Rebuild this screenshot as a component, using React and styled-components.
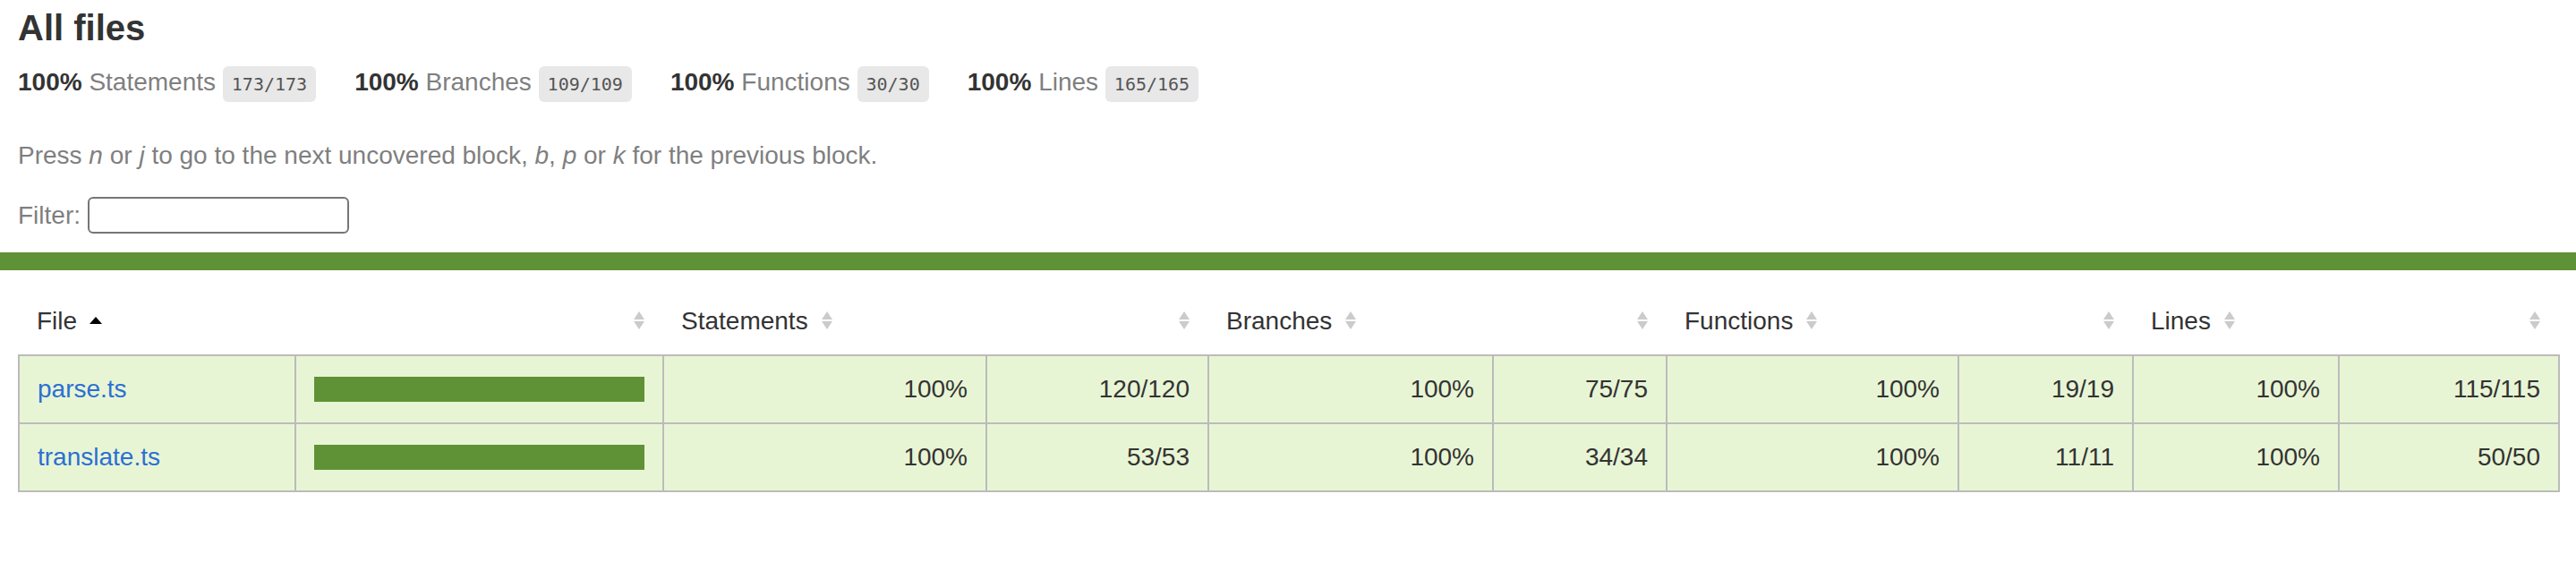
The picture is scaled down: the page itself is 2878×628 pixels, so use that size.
import React from "react";
import styled, { createGlobalStyle } from "styled-components";

const GlobalStyle = createGlobalStyle`
  *, *:before, *:after {
    box-sizing: border-box;
  }
  html, body {
    margin: 0;
    padding: 0;
    background: #fff;
  }
  body {
    font-family: "Liberation Sans", Helvetica, Arial, sans-serif;
    font-size: 28px;
    line-height: 34px;
    color: #333;
  }
`;

const GREEN = "#5f9236";
const HIGH_BG = "#e8f5d5";

const Header = styled.div`
  padding: 7px 20px 20px;
`;

const Title = styled.h1`
  margin: 0;
  font-size: 40px;
  line-height: 48px;
  font-weight: bold;
`;

const SummaryRow = styled.div`
  display: flex;
`;

const SummaryItem = styled.div`
  padding: 20px 43px 20px 0;
  white-space: nowrap;
`;

const Strong = styled.span`
  font-weight: bold;
`;

const Quiet = styled.span`
  color: #7f7f7f;
`;

const Fraction = styled.span`
  font-family: "DejaVu Sans Mono", "Liberation Mono", monospace;
  font-size: 20px;
  line-height: 24px;
  color: #555;
  background: #e8e8e8;
  padding: 8px 10px;
  border-radius: 6px;
  vertical-align: middle;
`;

const Hint = styled.p`
  margin: 28px 0;
  color: #7f7f7f;
`;

const FilterRow = styled.div`
  display: flex;
  align-items: center;
  gap: 8px;
  height: 43px;
  color: #7f7f7f;
`;

const SearchInput = styled.input`
  appearance: none;
  width: 292px;
  height: 41px;
  border: 2px solid #767676;
  border-radius: 6px;
  background: #fff;
  font-size: 26px;
  padding: 2px 6px;
  outline: none;
`;

const StatusLine = styled.div`
  height: 20px;
  background: ${GREEN};
`;

const TableWrap = styled.div`
  padding: 20px;
`;

const Table = styled.table`
  width: 100%;
  table-layout: fixed;
  border-collapse: collapse;
`;

const Col = styled.col`
  width: ${(p) => p.$w}px;
`;

const HeadRow = styled.tr`
  border-bottom: 2px solid #bbb;
`;

const Th = styled.th`
  padding: 20px;
  font-weight: normal;
  white-space: nowrap;
  text-align: ${(p) => (p.$right ? "right" : "left")};
`;

const Sorter = styled.span`
  display: inline-block;
  width: 14px;
  height: 20px;
  margin-left: 14px;
  & svg {
    display: block;
  }
`;

const Body = styled.tbody`
  border: 2px solid #bbb;
`;

const Row = styled.tr`
  border-bottom: 2px solid #bbb;
`;

const Td = styled.td`
  padding: 20px;
  background: ${HIGH_BG};
  border-right: 2px solid #bbb;
  white-space: nowrap;
  vertical-align: middle;
  text-align: ${(p) => (p.$right ? "right" : "left")};
  &:last-child {
    border-right: none;
  }
`;

const FileLink = styled.a`
  color: #2b70d3;
  text-decoration: none;
`;

const Chart = styled.div`
  height: 28px;
  line-height: 0;
  display: flex;
`;

const CoverFill = styled.div`
  height: 28px;
  background: ${GREEN};
`;

const SortIcon = ({ sorted }) => (
  <Sorter>
    <svg width="14" height="20" viewBox="0 0 14 20">
      {sorted ? (
        <polygon points="0,14 7,6 14,14" fill="#000" />
      ) : (
        <g fill="#cbcbcb">
          <polygon points="1,9 7,0 13,9" />
          <polygon points="1,11 7,20 13,11" />
        </g>
      )}
    </svg>
  </Sorter>
);

const summary = [
  { label: "Statements", frac: "173/173" },
  { label: "Branches", frac: "109/109" },
  { label: "Functions", frac: "30/30" },
  { label: "Lines", frac: "165/165" },
];

const colWidths = [309, 411, 361, 248, 318, 194, 326, 195, 230, 246];

const metrics = ["Statements", "Branches", "Functions", "Lines"];

const files = [
  { name: "parse.ts", cover: 100, values: ["120/120", "75/75", "19/19", "115/115"] },
  { name: "translate.ts", cover: 100, values: ["53/53", "34/34", "11/11", "50/50"] },
];

export default function App() {
  return (
    <>
      <GlobalStyle />
      <Header>
        <Title>All files</Title>
        <SummaryRow>
          {summary.map((s) => (
            <SummaryItem key={s.label}>
              <Strong>100% </Strong>
              <Quiet>{s.label}</Quiet> <Fraction>{s.frac}</Fraction>
            </SummaryItem>
          ))}
        </SummaryRow>
        <Hint>
          Press <em>n</em> or <em>j</em> to go to the next uncovered block, <em>b</em>,{" "}
          <em>p</em> or <em>k</em> for the previous block.
        </Hint>
        <FilterRow>
          Filter:
          <SearchInput type="search" />
        </FilterRow>
      </Header>
      <StatusLine />
      <TableWrap>
        <Table>
          <colgroup>
            {colWidths.map((w, i) => (
              <Col key={i} $w={w} />
            ))}
          </colgroup>
          <thead>
            <HeadRow>
              <Th>
                File
                <SortIcon sorted />
              </Th>
              <Th $right>
                <SortIcon />
              </Th>
              {metrics.map((m) => (
                <React.Fragment key={m}>
                  <Th>
                    {m}
                    <SortIcon />
                  </Th>
                  <Th $right>
                    <SortIcon />
                  </Th>
                </React.Fragment>
              ))}
            </HeadRow>
          </thead>
          <Body>
            {files.map((f) => (
              <Row key={f.name}>
                <Td>
                  <FileLink href="#">{f.name}</FileLink>
                </Td>
                <Td>
                  <Chart>
                    <CoverFill style={{ width: `${f.cover}%` }} />
                  </Chart>
                </Td>
                {f.values.map((v, i) => (
                  <React.Fragment key={i}>
                    <Td $right>100%</Td>
                    <Td $right>{v}</Td>
                  </React.Fragment>
                ))}
              </Row>
            ))}
          </Body>
        </Table>
      </TableWrap>
    </>
  );
}
